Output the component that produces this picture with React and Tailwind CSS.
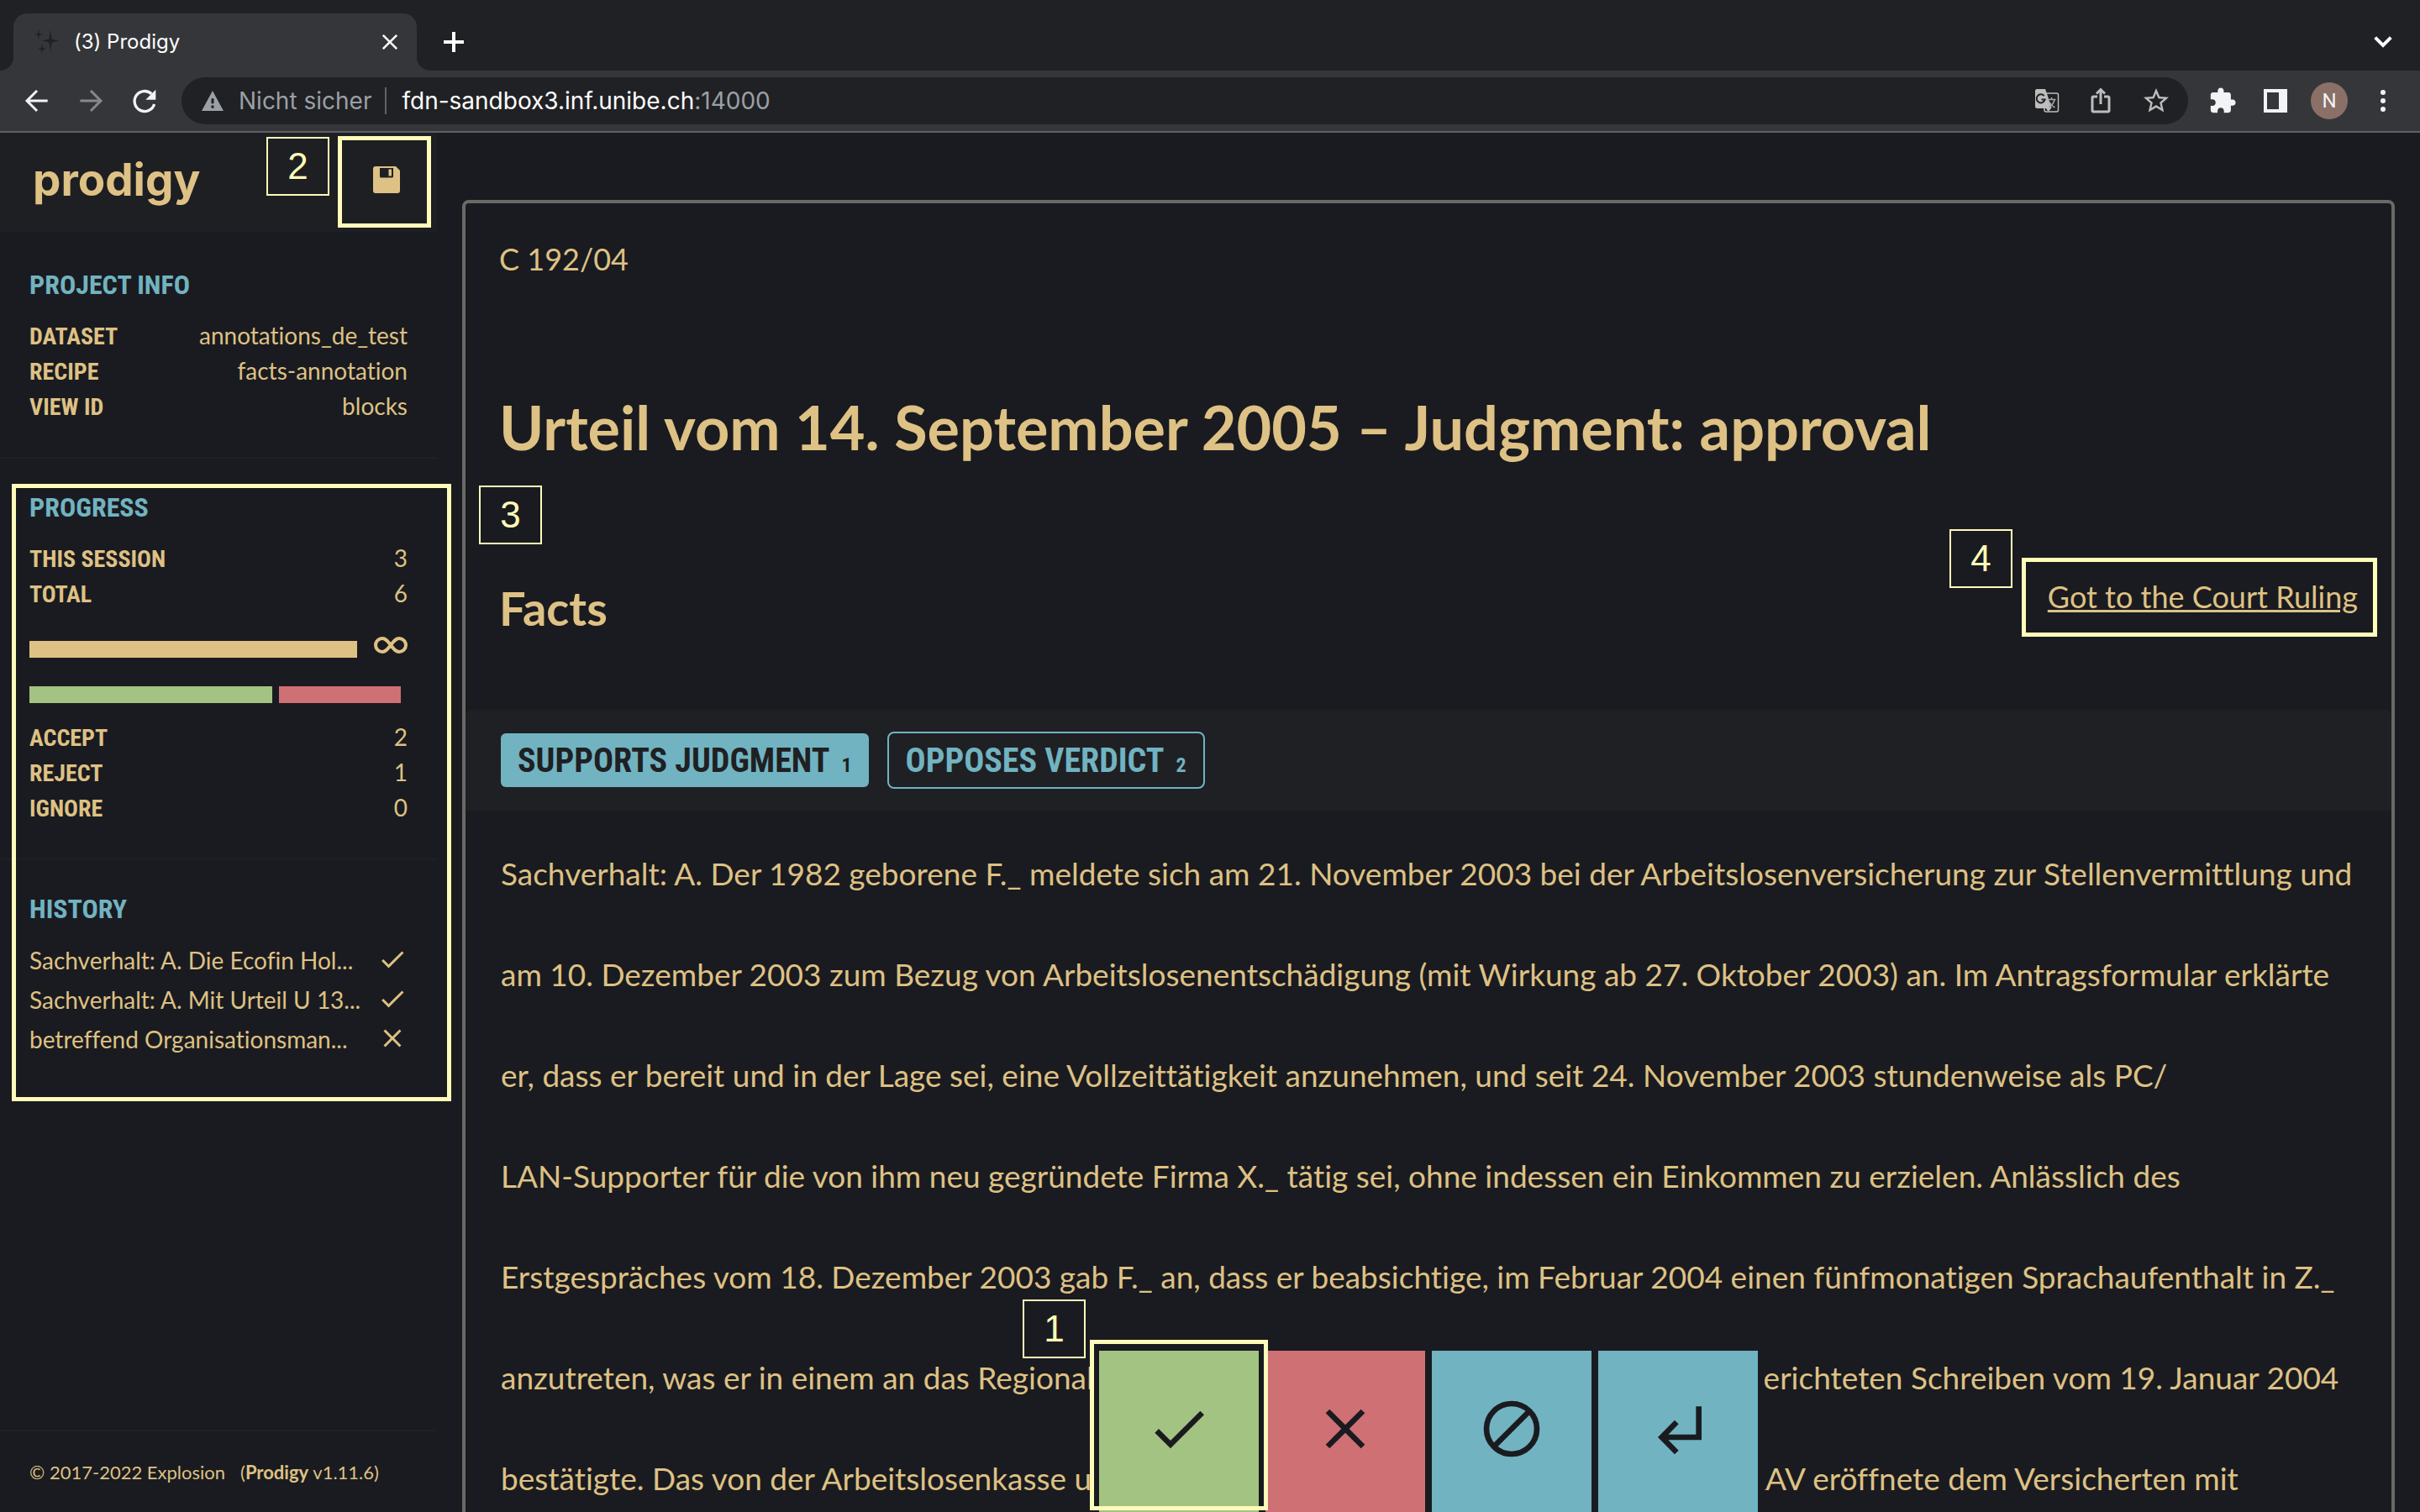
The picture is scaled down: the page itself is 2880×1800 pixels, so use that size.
import React from "react";

const FACTS = [
  "Sachverhalt: A. Der 1982 geborene F._ meldete sich am 21. November 2003 bei der Arbeitslosenversicherung zur Stellenvermittlung und",
  "am 10. Dezember 2003 zum Bezug von Arbeitslosenentschädigung (mit Wirkung ab 27. Oktober 2003) an. Im Antragsformular erklärte",
  "er, dass er bereit und in der Lage sei, eine Vollzeittätigkeit anzunehmen, und seit 24. November 2003 stundenweise als PC/",
  "LAN-Supporter für die von ihm neu gegründete Firma X._ tätig sei, ohne indessen ein Einkommen zu erzielen. Anlässlich des",
  "Erstgespräches vom 18. Dezember 2003 gab F._ an, dass er beabsichtige, im Februar 2004 einen fünfmonatigen Sprachaufenthalt in Z._",
  "anzutreten, was er in einem an das Regionale Arbeitsvermittlungszentrum (RAV) in Stadt T._ gerichteten Schreiben vom 19. Januar 2004",
  "bestätigte. Das von der Arbeitslosenkasse um Klärung der Anspruchsberechtigung ersuchte RAV eröffnete dem Versicherten mit",
];

const HISTORY = [
  ["Sachverhalt: A. Die Ecofin Hol...", "accept"],
  ["Sachverhalt: A. Mit Urteil U 13...", "accept"],
  ["betreffend Organisationsman...", "reject"],
];

function Stroke({ className, width = 2, children, viewBox = "0 0 24 24" }) {
  return (
    <svg className={className} viewBox={viewBox} fill="none" stroke="currentColor" strokeWidth={width} aria-hidden="true">
      {children}
    </svg>
  );
}

function CheckIcon({ className }) {
  return (
    <svg className={className} viewBox="0 0 24 24" fill="currentColor" aria-hidden="true">
      <path d="M9 16.2L4.8 12l-1.4 1.4L9 19 21 7l-1.4-1.4L9 16.2z" />
    </svg>
  );
}

function CrossIcon({ className }) {
  return (
    <svg className={className} viewBox="0 0 24 24" fill="currentColor" aria-hidden="true">
      <path d="M19 6.4L17.6 5 12 10.6 6.4 5 5 6.4 10.6 12 5 17.6 6.4 19 12 13.4 17.6 19 19 17.6 13.4 12z" />
    </svg>
  );
}

function Marker({ n, className }) {
  return (
    <div
      className={`absolute flex h-[70px] w-[75px] items-center justify-center border-2 border-[#fffbb9] font-['Liberation_Sans',sans-serif] text-[44px] leading-none text-[#fffbb9] ${className}`}
    >
      {n}
    </div>
  );
}

function TabStrip() {
  return (
    <div className="flex h-[84px] shrink-0 items-end bg-[#202124] text-white">
      <div className="w-4 bg-[#35363a]">
        <div className="h-4 w-4 rounded-br-2xl bg-[#202124]" />
      </div>
      <div className="flex h-[68px] w-[480px] items-center rounded-t-2xl bg-[#35363a] pr-[18px] pl-6">
        <svg className="h-8 w-8" viewBox="0 0 32 32" fill="#202124" aria-hidden="true">
          <path d="M20 1l1.600 11.400L30 14.500l-8.400 2.100L20 28l-1.600-11.400L10 14.500l8.400-2.100z" />
          <path d="M6 1l1 5 4 1-4 1-1 5-1-5-4-1 4-1zM10 18l1 5 4 1-4 1-1 5-1-5-4-1 4-1z" />
        </svg>
        <span className="ml-4 flex-1 text-2xl">(3) Prodigy</span>
        <button type="button" aria-label="Close tab" className="flex h-7 w-7 items-center justify-center">
          <Stroke className="h-7 w-7" width={2.2}>
            <path d="M5 5l14 14M19 5L5 19" />
          </Stroke>
        </button>
      </div>
      <div className="w-4 bg-[#35363a]">
        <div className="h-4 w-4 rounded-bl-2xl bg-[#202124]" />
      </div>
      <button type="button" aria-label="New tab" className="mb-[18px] ml-3 h-8 w-8">
        <Stroke className="h-8 w-8" width={3}>
          <path d="M12 3v18M3 12h18" />
        </Stroke>
      </button>
      <button type="button" aria-label="Search tabs" className="mr-7 mb-[18px] ml-auto h-8 w-8">
        <Stroke className="h-8 w-8" width={3}>
          <path d="M5 8l7 7 7-7" />
        </Stroke>
      </button>
    </div>
  );
}

function Toolbar() {
  return (
    <div className="flex h-[74px] shrink-0 items-center border-b-2 border-[#5f6064] bg-[#35363a] pr-[30px] pl-7 text-[#f1f3f4]">
      <button type="button" aria-label="Back">
        <Stroke className="h-8 w-8" width={2.2}>
          <path d="M21.500 12H3.500M12 3L3 12l9 9" />
        </Stroke>
      </button>
      <button type="button" aria-label="Forward" className="ml-8 text-[#87888b]">
        <Stroke className="h-8 w-8" width={2.2}>
          <path d="M2.500 12h18M12 3l9 9-9 9" />
        </Stroke>
      </button>
      <button type="button" aria-label="Reload" className="ml-8">
        <Stroke className="h-8 w-8" width={2.5}>
          <path d="M18.200 5.800A9 9 0 1 0 20.700 15" />
          <path d="M22 2v9h-9z" fill="currentColor" stroke="none" />
        </Stroke>
      </button>
      <div className="ml-7 flex h-14 flex-1 items-center rounded-full bg-[#202124] pr-5 pl-6 text-[28px]">
        <svg className="h-[26px] w-[26px] text-[#9aa0a6]" viewBox="0 0 24 24" fill="currentColor" aria-hidden="true">
          <path fillRule="evenodd" d="M12 1L0 23h24zM10.600 9.500h2.800v5.500h-2.800zM10.600 17h2.800v3h-2.800z" />
        </svg>
        <span className="ml-[18px] text-[#9aa0a6]">Nicht sicher</span>
        <span className="ml-4 h-8 w-0.5 bg-[#5f6368]" />
        <input
          aria-label="Address"
          defaultValue="fdn-sandbox3.inf.unibe.ch"
          className="ml-[18px] field-sizing-content bg-transparent text-white outline-none"
        />
        <span className="flex-1 text-[#9aa0a6]">:14000</span>
        <div className="flex items-center gap-8 text-[#bdbdbd]">
          <button type="button" aria-label="Translate">
            <svg className="h-8 w-8" viewBox="0 0 32 32" aria-hidden="true">
              <rect x="13" y="7" width="16.500" height="22" rx="2" fill="none" stroke="currentColor" strokeWidth="1.500" />
              <path d="M3.500 2H14l2.500 7 5 15.500L17.500 29 15 25H4.500a2.500 2.500 0 0 1-2.500-2.500v-18A2.500 2.500 0 0 1 3.500 2z" fill="currentColor" />
              <path d="M12.600 10.200a5 5 0 1 0 1 4.300H9.500" fill="none" stroke="#202124" strokeWidth="2" />
              <path d="M16.500 14.500h10M21.500 12v2.500M25 15c-1 4-4 7-6.500 8.500M18.500 17c1.500 3 4 5.500 7 7" fill="none" stroke="#a8a8a8" strokeWidth="1.500" />
            </svg>
          </button>
          <button type="button" aria-label="Share">
            <Stroke className="h-8 w-8" viewBox="0 0 32 32" width={3}>
              <path d="M12 11H7.500A1.500 1.500 0 0 0 6 12.500v15A1.500 1.500 0 0 0 7.500 29h17a1.500 1.500 0 0 0 1.500-1.500v-15a1.500 1.500 0 0 0-1.500-1.500H20M16 20V3M11 7.500l5-5 5 5" />
            </Stroke>
          </button>
          <button type="button" aria-label="Bookmark">
            <svg className="h-9 w-9" viewBox="0 0 24 24" fill="currentColor" aria-hidden="true">
              <path d="M22 9.240l-7.190-.62L12 2 9.190 8.630 2 9.240l5.460 4.730L5.820 21 12 17.270 18.180 21l-1.630-7.030L22 9.240zM12 15.400l-3.760 2.270 1-4.280-3.320-2.880 4.380-.38L12 6.100l1.710 4.040 4.380.38-3.320 2.880 1 4.280L12 15.400z" />
            </svg>
          </button>
        </div>
      </div>
      <div className="ml-6 flex items-center gap-7">
        <button type="button" aria-label="Extensions" className="mr-1">
          <svg className="h-[34px] w-[34px]" viewBox="0 0 24 24" fill="currentColor" aria-hidden="true">
            <path d="M20.500 11H19V7c0-1.100-.9-2-2-2h-4V3.500C13 2.120 11.880 1 10.500 1S8 2.120 8 3.500V5H4c-1.100 0-1.990.9-1.990 2v3.800H3.500c1.490 0 2.700 1.210 2.700 2.700s-1.210 2.700-2.700 2.700H2V20c0 1.100.9 2 2 2h3.800v-1.500c0-1.490 1.210-2.700 2.700-2.700s2.700 1.210 2.700 2.700V22H17c1.100 0 2-.9 2-2v-4h1.500c1.380 0 2.500-1.120 2.500-2.500S21.880 11 20.500 11z" />
          </svg>
        </button>
        <button type="button" aria-label="Side panel" className="h-7 w-7 border-4 border-r-10 border-[#f1f3f4]" />
        <button type="button" aria-label="Profile" className="flex h-11 w-11 items-center justify-center rounded-full bg-[#8a7066] font-['Roboto',sans-serif] text-2xl">
          N
        </button>
        <button type="button" aria-label="Menu">
          <svg className="h-7 w-7" viewBox="0 0 28 28" fill="currentColor" aria-hidden="true">
            <circle cx="14" cy="4" r="3" />
            <circle cx="14" cy="14" r="3" />
            <circle cx="14" cy="24" r="3" />
          </svg>
        </button>
      </div>
    </div>
  );
}

function Section({ title, children, last }) {
  return (
    <section className={`px-[35px] pt-[38px] pb-[39px] ${last ? "" : "border-b-2 border-[#1f2024]"}`}>
      <h2 className="mb-5 font-['Roboto_Condensed',sans-serif] text-[32px] leading-10 font-bold text-[#71b3c1] uppercase">{title}</h2>
      {children}
    </section>
  );
}

function Stats({ rows }) {
  return (
    <table className="w-full text-[28px] leading-10">
      <tbody>
        {rows.map(([label, value]) => (
          <tr key={label}>
            <th scope="row" className="p-0 text-left align-baseline font-['Roboto_Condensed',sans-serif] font-bold uppercase">
              {label}
            </th>
            <td className="p-0 text-right align-baseline">{value}</td>
          </tr>
        ))}
      </tbody>
    </table>
  );
}

function Sidebar() {
  return (
    <aside className="relative flex w-[520px] shrink-0 flex-col">
      <header className="flex h-[118px] items-center justify-between bg-[#1e1f23] pr-11 pb-1.5 pl-[39px]">
        <span className="font-['Inter',sans-serif] text-[53px] leading-none font-bold">prodigy</span>
        <button type="button" aria-label="Save">
          <svg className="h-8 w-8" viewBox="0 0 32 32" fill="currentColor" aria-hidden="true">
            <path fillRule="evenodd" d="M3 0h24l5 5v24a3 3 0 0 1-3 3H3a3 3 0 0 1-3-3V3a3 3 0 0 1 3-3zM8 2v10a1.500 1.500 0 0 0 1.500 1.500h13A1.500 1.500 0 0 0 24 12V2zM18.500 3.500h3.500v8h-3.500z" />
          </svg>
        </button>
      </header>
      <div className="pt-[5px]">
        <Section title="Project info">
          <Stats rows={[["Dataset", "annotations_de_test"], ["Recipe", "facts-annotation"], ["View ID", "blocks"]]} />
        </Section>
        <Section title="Progress">
          <Stats rows={[["This session", 3], ["Total", 6]]} />
          <div className="mt-[30px] flex h-[25px] items-end gap-5">
            <div className="h-5 flex-1 bg-[#dec184]" />
            <Stroke className="h-5 w-10 self-start" viewBox="0 0 40 20" width={4}>
              <path d="M20 10C16 5 14 2 10 2a8 8 0 0 0 0 16c4 0 6-3 10-8s6-8 10-8a8 8 0 0 1 0 16c-4 0-6-3-10-8z" />
            </Stroke>
          </div>
          <div className="mt-[34px] mb-5 flex h-5 gap-2 pr-2">
            <div className="h-5 flex-2 bg-[#a3c382]" />
            <div className="h-5 flex-1 bg-[#cf7075]" />
          </div>
          <Stats rows={[["Accept", 2], ["Reject", 1], ["Ignore", 0]]} />
        </Section>
        <Section title="History" last>
          <ul className="-mt-0.5 text-[28px] leading-[47px]">
            {HISTORY.map(([text, answer]) => (
              <li key={text} className="flex items-center justify-between">
                <a href="#history" className="whitespace-nowrap">
                  {text}
                </a>
                {answer === "accept" ? <CheckIcon className="mb-1 h-9 w-9" /> : <CrossIcon className="mb-1 h-9 w-9" />}
              </li>
            ))}
          </ul>
        </Section>
      </div>
      <footer className="mt-auto flex h-[98px] items-center gap-[18px] border-t-2 border-[#1f2024] px-[35px] text-[22px]">
        <span>© 2017-2022 Explosion</span>
        <span>
          (<b className="font-bold">Prodigy</b> v1.11.6)
        </span>
      </footer>
      <Marker n="2" className="top-[5px] left-[317px]" />
      <div className="absolute top-1 left-[402px] h-[109px] w-[111px] border-5 border-[#fffbb9]" />
      <div className="absolute top-[418px] left-[14px] h-[735px] w-[523px] border-5 border-[#fffbb9]" />
    </aside>
  );
}

function Actions() {
  const base = "flex flex-1 items-center justify-center pb-1.5";
  return (
    <div className="absolute bottom-0 left-1/2 flex h-[200px] w-[800px] -translate-x-1/2 gap-2 bg-[#1a1b20] px-2 pt-2 text-[#1a1b20]">
      <button type="button" aria-label="Accept" className={`${base} bg-[#a3c382]`}>
        <CheckIcon className="h-20 w-20" />
      </button>
      <button type="button" aria-label="Reject" className={`${base} bg-[#cf7075]`}>
        <CrossIcon className="h-20 w-20" />
      </button>
      <button type="button" aria-label="Ignore" className={`${base} bg-[#71b3c1]`}>
        <Stroke className="h-20 w-20" width={2}>
          <circle cx="12" cy="12" r="9" />
          <path d="M18.300 5.700L5.700 18.300" />
        </Stroke>
      </button>
      <button type="button" aria-label="Undo" className={`${base} bg-[#71b3c1]`}>
        <Stroke className="h-20 w-20" width={2}>
          <path d="M19.400 4v11H7M11.500 9.600L6.200 15l5.300 5.400" />
        </Stroke>
      </button>
      <div className="absolute top-[-5px] left-[-3px] h-[203px] w-[212px] border-5 border-[#fffbb9]" />
      <Marker n="1" className="top-[-53px] left-[-83px]" />
    </div>
  );
}

export default function App() {
  return (
    <div className="flex h-screen flex-col overflow-hidden bg-[#1a1b20] font-['Inter',sans-serif] [font-variant-ligatures:none]">
      <TabStrip />
      <Toolbar />
      <div className="flex min-h-0 flex-1 font-['Lato',sans-serif] text-[#dec184]">
        <Sidebar />
        <main className="relative min-w-0 flex-1 overflow-hidden px-[30px] pt-20">
          <article className="relative rounded-lg border-4 border-[#6b6966]">
            <p className="px-10 pt-[42px] text-[36px] leading-[48px]">C 192/04</p>
            <h1 className="px-10 pt-[132px] text-[72px] leading-[88px] font-bold">Urteil vom 14. September 2005 – Judgment: approval</h1>
            <div className="flex items-center justify-between px-10 pt-[138px]">
              <h2 className="text-[56px] leading-[64px] font-bold">Facts</h2>
              <a href="#ruling" className="mb-7 text-[36px] leading-10 underline">
                Got to the Court Ruling
              </a>
            </div>
            <div className="mt-[87px] flex h-[120px] items-center gap-[22px] rounded-t-lg bg-[#1f2023] px-[42px] font-['Roboto_Condensed',sans-serif] text-[40px] font-bold">
              <button type="button" className="flex h-16 items-baseline gap-[14px] rounded-md bg-[#71b3c1] px-5 leading-[66px] text-[#1f2023]">
                SUPPORTS JUDGMENT <span className="text-2xl">1</span>
              </button>
              <button type="button" className="flex h-[68px] items-baseline gap-[14px] rounded-lg border-2 border-[#71b3c1] px-5 leading-[66px] text-[#71b3c1]">
                OPPOSES VERDICT <span className="text-2xl">2</span>
              </button>
            </div>
            <div className="pt-[15px] pl-[42px] text-[37px] leading-[120px] whitespace-nowrap">
              {FACTS.map((line) => (
                <p key={line}>{line}</p>
              ))}
            </div>
            <Marker n="3" className="top-[336px] left-4" />
            <Marker n="4" className="top-[388px] right-[451px]" />
            <div className="absolute top-[422px] right-[17px] h-[94px] w-[423px] border-5 border-[#fffbb9]" />
          </article>
          <Actions />
        </main>
      </div>
    </div>
  );
}
